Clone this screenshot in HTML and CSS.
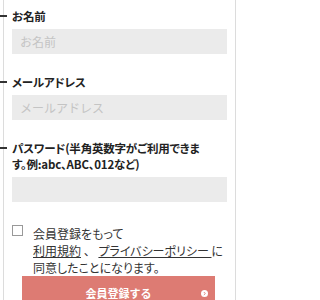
FILE: index.html
```html
<!DOCTYPE html>
<html lang="ja">
<head>
<meta charset="utf-8">
<link rel="stylesheet" href="styles.css">
</head>
<body>
<div class="form">
  <div class="field">
    <div class="label">お名前</div>
    <input class="input" type="text" placeholder="お名前">
  </div>
  <div class="field">
    <div class="label">メールアドレス</div>
    <input class="input" type="text" placeholder="メールアドレス">
  </div>
  <div class="field">
    <div class="label">パスワード(半角英数字がご利用できま<br>す。例:abc、ABC、012など)</div>
    <input class="input" type="password">
  </div>
  <div class="agree">
    <span class="check"></span>
    <p class="agree-text">会員登録をもって<br><a href="#">利用規約</a> <span class="punct">、</span> <a href="#">プライバシーポリシー&nbsp;</a>に<br>同意したことになります。</p>
  </div>
  <button class="submit" type="button">会員登録する
    <svg class="submit-icon" width="7" height="7" viewBox="0 0 8 8"><circle cx="4" cy="4" r="4" fill="#fff"/><path d="M3.3 2.4 L4.9 4 L3.3 5.6" fill="none" stroke="#dd7b73" stroke-width="1.1"/></svg>
  </button>
</div>
</body>
</html>
```
FILE: styles.css
```css
html, body {
  margin: 0;
  padding: 0;
  background: #fff;
}
body {
  font-family: "Noto Sans CJK JP", "Noto Sans", sans-serif;
  color: #222;
  font-feature-settings: "palt";
}
.form {
  width: 233px;
  margin: 0 0 0 3px;
  border-left: 1px solid #dcdcdc;
  border-right: 1px solid #dcdcdc;
  padding: 8px 8px 0;
  min-height: 300px;
  box-sizing: border-box;
  display: flex;
  flex-direction: column;
}
.field {
  display: flex;
  flex-direction: column;
  margin-bottom: 20px;
}
.label {
  position: relative;
  font-size: 11.5px;
  font-weight: bold;
  line-height: 16px;
  letter-spacing: -0.2px;
  margin-bottom: 5px;
}
.label::before {
  content: "";
  position: absolute;
  left: -12px;
  top: 7px;
  width: 7px;
  height: 1.5px;
  background: #333;
}
.input {
  height: 25px;
  border: none;
  background: #ebebeb;
  padding: 0 8px;
  margin: 0;
  font-family: inherit;
  font-size: 12px;
  box-sizing: border-box;
  width: 100%;
  outline: none;
}
.input::placeholder {
  color: #c4c4c4;
}
.agree {
  display: flex;
  align-items: flex-start;
  gap: 10px;
  margin-top: 3px;
}
.check {
  flex: none;
  width: 11px;
  height: 11px;
  border: 1px solid #999;
  box-sizing: border-box;
  background: #fff;
}
.agree-text {
  margin: 0;
  font-size: 12px;
  line-height: 17px;
  color: #333;
}
.agree-text a {
  color: #333;
  text-decoration: underline;
}
.punct {
  font-feature-settings: normal;
}
.submit {
  position: relative;
  margin: 0 12px 0 10px;
  height: 34px;
  border: none;
  background: #dd7b73;
  color: #fff;
  font-family: inherit;
  font-size: 11px;
  font-weight: bold;
  padding: 0;
}
.submit-icon {
  position: absolute;
  right: 7px;
  top: 14px;
}
```
